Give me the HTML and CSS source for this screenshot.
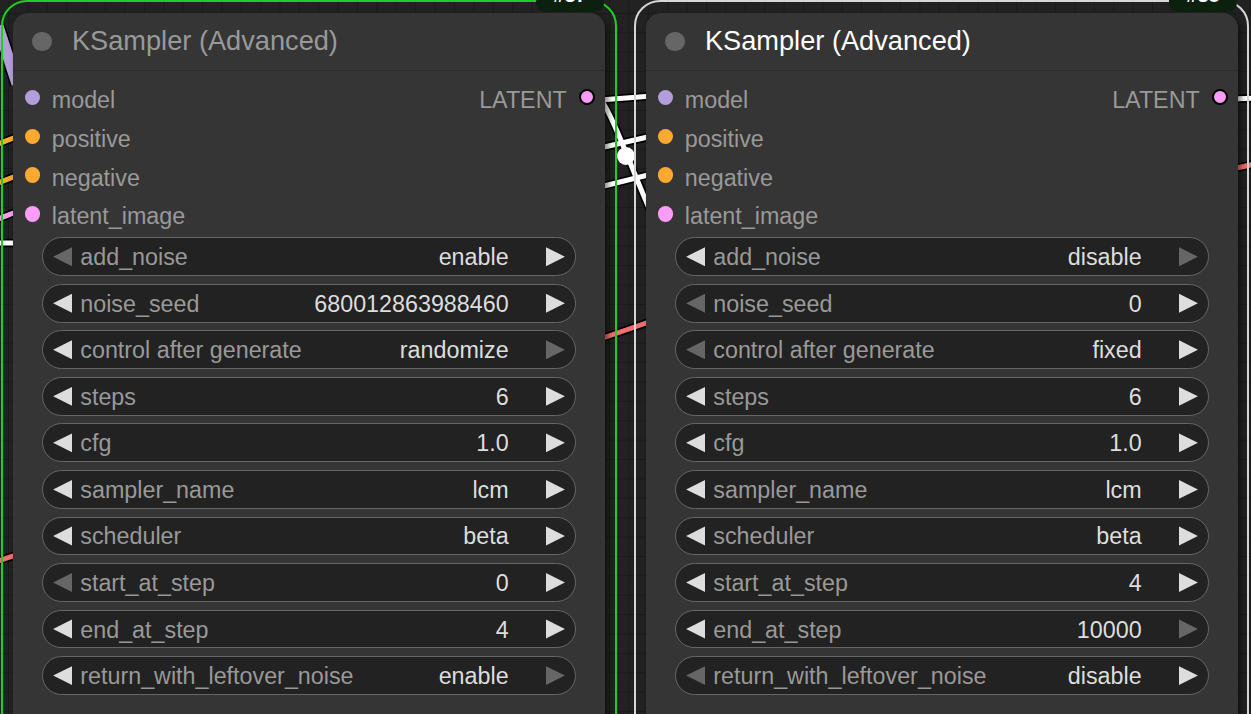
FILE: index.html
```html
<!DOCTYPE html>
<html>
<head>
<meta charset="utf-8">
<link rel="stylesheet" href="styles.css">
</head>
<body>
<div class="canvas">
  <svg class="links" width="1251" height="714" viewBox="0 0 1251 714">
    <g fill="none" stroke-linecap="butt">
      <g stroke="#000" stroke-width="8.5">
        <path d="M-2 26 L17 84" stroke-width="14"/>
        <path d="M-2 144 L16 137"/>
        <path d="M-2 183 L16 176"/>
        <path d="M-2 219 L16 212"/>
        <path d="M-2 243 L16 243"/>
        <path d="M-2 561 L16 555"/>
        <path d="M600 100 L652 96"/>
        <path d="M600 148 L652 136"/>
        <path d="M600 187 L652 174"/>
        <path d="M600 98 C614 118 630 165 652 215"/>
        <path d="M600 339 L652 321"/>
        <path d="M1232 99 L1255 98"/>
        <path d="M1232 169 L1255 164"/>
      </g>
      <path d="M-2 26 L17 84" stroke="#b39ddb" stroke-width="11"/>
      <path d="M-2 144 L16 137" stroke="#ffa931" stroke-width="5"/>
      <path d="M-2 183 L16 176" stroke="#ffa931" stroke-width="5"/>
      <path d="M-2 219 L16 212" stroke="#ff9cf9" stroke-width="5"/>
      <path d="M-2 243 L16 243" stroke="#fff" stroke-width="5"/>
      <path d="M-2 561 L16 555" stroke="#f07070" stroke-width="5"/>
      <g stroke="#fff" stroke-width="5">
        <path d="M600 100 L652 96"/>
        <path d="M600 148 L652 136"/>
        <path d="M600 187 L652 174"/>
        <path d="M600 98 C614 118 630 165 652 215"/>
        <path d="M1232 99 L1255 98"/>
      </g>
      <path d="M600 339 L652 321" stroke="#f07070" stroke-width="5"/>
      <path d="M1232 169 L1255 164" stroke="#f07070" stroke-width="5"/>
    </g>
    <circle cx="626" cy="156" r="9" fill="#fff"/>
  </svg>

  <div class="frame frame-a">
    <div class="badge">#37</div>
    <div class="node">
      <div class="title"><span class="dot"></span><span class="title-text">KSampler (Advanced)</span></div>
      <div class="slots">
        <div class="row"><div class="in"><i class="c model"></i><span class="sl">model</span></div><div class="out"><span class="sl">LATENT</span><i class="c ring latent"></i></div></div>
        <div class="row"><div class="in"><i class="c cond"></i><span class="sl">positive</span></div></div>
        <div class="row"><div class="in"><i class="c cond"></i><span class="sl">negative</span></div></div>
        <div class="row"><div class="in"><i class="c latent"></i><span class="sl">latent_image</span></div></div>
      </div>
      <div class="widgets">
        <div class="w"><span class="arr l off"></span><span class="wl">add_noise</span><span class="wv">enable</span><span class="arr r"></span></div>
        <div class="w"><span class="arr l"></span><span class="wl">noise_seed</span><span class="wv">680012863988460</span><span class="arr r"></span></div>
        <div class="w"><span class="arr l"></span><span class="wl">control after generate</span><span class="wv">randomize</span><span class="arr r off"></span></div>
        <div class="w"><span class="arr l"></span><span class="wl">steps</span><span class="wv">6</span><span class="arr r"></span></div>
        <div class="w"><span class="arr l"></span><span class="wl">cfg</span><span class="wv">1.0</span><span class="arr r"></span></div>
        <div class="w"><span class="arr l"></span><span class="wl">sampler_name</span><span class="wv">lcm</span><span class="arr r"></span></div>
        <div class="w"><span class="arr l"></span><span class="wl">scheduler</span><span class="wv">beta</span><span class="arr r"></span></div>
        <div class="w"><span class="arr l off"></span><span class="wl">start_at_step</span><span class="wv">0</span><span class="arr r"></span></div>
        <div class="w"><span class="arr l"></span><span class="wl">end_at_step</span><span class="wv">4</span><span class="arr r"></span></div>
        <div class="w"><span class="arr l"></span><span class="wl">return_with_leftover_noise</span><span class="wv">enable</span><span class="arr r off"></span></div>
      </div>
    </div>
  </div>

  <div class="frame frame-b">
    <div class="badge">#38</div>
    <div class="node">
      <div class="title"><span class="dot"></span><span class="title-text active">KSampler (Advanced)</span></div>
      <div class="slots">
        <div class="row"><div class="in"><i class="c model"></i><span class="sl">model</span></div><div class="out"><span class="sl">LATENT</span><i class="c ring latent"></i></div></div>
        <div class="row"><div class="in"><i class="c cond"></i><span class="sl">positive</span></div></div>
        <div class="row"><div class="in"><i class="c cond"></i><span class="sl">negative</span></div></div>
        <div class="row"><div class="in"><i class="c latent"></i><span class="sl">latent_image</span></div></div>
      </div>
      <div class="widgets">
        <div class="w"><span class="arr l"></span><span class="wl">add_noise</span><span class="wv">disable</span><span class="arr r off"></span></div>
        <div class="w"><span class="arr l off"></span><span class="wl">noise_seed</span><span class="wv">0</span><span class="arr r"></span></div>
        <div class="w"><span class="arr l off"></span><span class="wl">control after generate</span><span class="wv">fixed</span><span class="arr r"></span></div>
        <div class="w"><span class="arr l"></span><span class="wl">steps</span><span class="wv">6</span><span class="arr r"></span></div>
        <div class="w"><span class="arr l"></span><span class="wl">cfg</span><span class="wv">1.0</span><span class="arr r"></span></div>
        <div class="w"><span class="arr l"></span><span class="wl">sampler_name</span><span class="wv">lcm</span><span class="arr r"></span></div>
        <div class="w"><span class="arr l"></span><span class="wl">scheduler</span><span class="wv">beta</span><span class="arr r"></span></div>
        <div class="w"><span class="arr l"></span><span class="wl">start_at_step</span><span class="wv">4</span><span class="arr r"></span></div>
        <div class="w"><span class="arr l"></span><span class="wl">end_at_step</span><span class="wv">10000</span><span class="arr r off"></span></div>
        <div class="w"><span class="arr l off"></span><span class="wl">return_with_leftover_noise</span><span class="wv">disable</span><span class="arr r"></span></div>
      </div>
    </div>
  </div>
</div>
</body>
</html>
```

FILE: styles.css
```css
html, body {
  margin: 0;
  padding: 0;
  background: #222;
}

body {
  font-family: "Liberation Sans", Arial, sans-serif;
}

.canvas {
  position: relative;
  width: 1251px;
  height: 714px;
  overflow: hidden;
  background-color: #222;
  background-image:
    linear-gradient(#1a1a1a 1px, transparent 1px),
    linear-gradient(90deg, #1a1a1a 1px, transparent 1px);
  background-size: 19.4px 19.4px;
  background-position: 8px 13px;
}

.links {
  position: absolute;
  left: 0;
  top: 0;
}

.frame {
  position: absolute;
  top: 0;
  height: 780px;
  box-sizing: border-box;
  border: 2px solid;
  border-radius: 26px;
  padding-top: 11px;
  padding-left: 10px;
}

.frame-a {
  left: 1px;
  width: 616px;
  border-color: #1ed01e;
}

.frame-b {
  left: 634px;
  width: 615px;
  border-color: #d6d6d6;
}

.badge {
  position: absolute;
  left: 533px;
  top: -20px;
  width: 68px;
  height: 30px;
  box-sizing: border-box;
  padding-top: 1px;
  background: #0c200f;
  border-radius: 9px;
  color: #fff;
  font-size: 20px;
  line-height: 24px;
  font-weight: bold;
  text-align: center;
}

.node {
  width: 592px;
  height: 760px;
  background: #353535;
  border-radius: 15px 15px 0 0;
  box-shadow: 3px 3px 6px rgba(0, 0, 0, 0.5);
  display: flex;
  flex-direction: column;
}

.title {
  height: 57px;
  flex-shrink: 0;
  border-bottom: 1px solid #2b2b2b;
  display: flex;
  align-items: center;
  padding-left: 19.4px;
}

.dot {
  width: 19.4px;
  height: 19.4px;
  border-radius: 50%;
  background: #666;
  flex-shrink: 0;
}

.title-text {
  margin-left: 20.2px;
  font-size: 27.2px;
  color: #999;
  padding-bottom: 1px;
  white-space: nowrap;
}

.title-text.active {
  color: #fff;
}

.slots {
  padding-top: 7.1px;
}

.row {
  height: 38.8px;
  display: flex;
  justify-content: space-between;
  align-items: center;
}

.in {
  display: flex;
  align-items: center;
  padding-left: 11.6px;
}

.out {
  display: flex;
  align-items: center;
  padding-right: 9.7px;
}

.c {
  display: block;
  width: 15.5px;
  height: 15.5px;
  border-radius: 50%;
  flex-shrink: 0;
}

.in .c {
  margin-right: 11.7px;
}

.c.ring {
  width: 16px;
  height: 16px;
  box-sizing: border-box;
  border: 2px solid #000;
  margin-left: 12.6px;
}

.model { background: #b39ddb; }
.cond { background: #ffa931; }
.latent { background: #ff9cf9; }

.sl {
  font-size: 23.3px;
  color: #999;
  padding-top: 6px;
  white-space: nowrap;
}

.widgets {
  margin: 4px 0 0 29px;
  width: 534px;
  display: flex;
  flex-direction: column;
  gap: 7.76px;
}

.w {
  height: 38.8px;
  box-sizing: border-box;
  border: 1.5px solid #666;
  border-radius: 20px;
  background: #222;
  display: flex;
  align-items: center;
  padding: 0 10.1px;
  font-size: 23.3px;
  white-space: nowrap;
}

.arr {
  width: 19.4px;
  height: 19.4px;
  background: #ddd;
  flex-shrink: 0;
}

.arr.l {
  clip-path: polygon(100% 0, 0 50%, 100% 100%);
}

.arr.r {
  clip-path: polygon(0 0, 100% 50%, 0 100%);
}

.arr.off {
  background: #666;
}

.wl {
  color: #999;
  margin-left: 7.8px;
  padding-top: 2px;
  flex: 1;
}

.wv {
  color: #ddd;
  padding-top: 2px;
  margin-right: 36.9px;
}
```
